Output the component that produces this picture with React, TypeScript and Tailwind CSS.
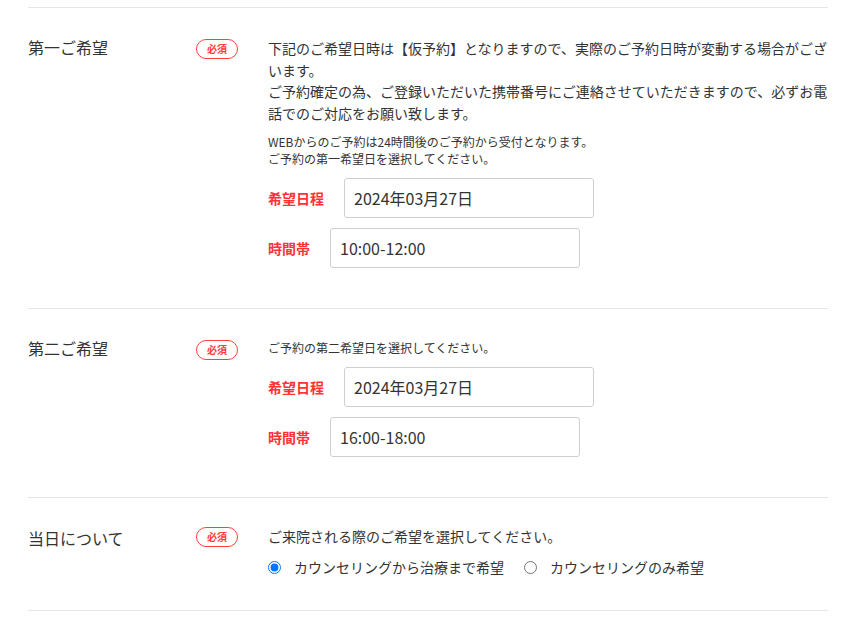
import React from "react";

const font = { fontFamily: '"Noto Sans CJK JP", "Noto Sans", sans-serif' };

function Badge() {
  return (
    <div className="w-[42px] h-[20px] shrink-0 rounded-full border border-[#ff4040] flex items-center justify-center text-[10px] font-bold text-[#ff3b3b] leading-none mt-[1px]">
      必須
    </div>
  );
}

function Field({ label, value }: { label: string; value: string }) {
  return (
    <div className="flex items-center mb-[10px]">
      <span className="text-[14px] font-bold text-[#ff3333] mr-[20px] leading-none">{label}</span>
      <input
        readOnly
        value={value}
        className="w-[250px] h-[40px] border border-[#cfcfcf] rounded-[3px] px-[9px] text-[16px] text-[#333] outline-none bg-white"
        style={font}
      />
    </div>
  );
}

function Row({
  title,
  children,
  pad,
  titlePad,
}: {
  title: string;
  children: React.ReactNode;
  pad: string;
  titlePad: string;
}) {
  return (
    <div className={"flex border-t border-[#e5e5e5] " + pad}>
      <div className={"w-[168px] shrink-0 text-[16px] text-[#333] leading-[18px] " + titlePad}>{title}</div>
      <Badge />
      <div className="w-[560px] ml-[30px] text-[#333]">{children}</div>
    </div>
  );
}

export default function App() {
  return (
    <div className="bg-white w-[849px] h-[619px] overflow-hidden" style={font}>
      <div className="w-[800px] ml-[28px] mt-[7px] border-b border-[#e5e5e5]">
        <Row title="第一ご希望" pad="pt-[30px] pb-[30px]" titlePad="pt-0">
          <p className="text-[14px] leading-[21.5px]">
            下記のご希望日時は【仮予約】となりますので、実際のご予約日時が変動する場合がございます。
            <br />
            ご予約確定の為、ご登録いただいた携帯番号にご連絡させていただきますので、必ずお電話でのご対応をお願い致します。
          </p>
          <p className="text-[12px] leading-[17px] mt-[9px]">
            WEBからのご予約は24時間後のご予約から受付となります。
            <br />
            ご予約の第一希望日を選択してください。
          </p>
          <div className="mt-[11px]">
            <Field label="希望日程" value="2024年03月27日" />
            <Field label="時間帯" value="10:00-12:00" />
          </div>
        </Row>
        <Row title="第二ご希望" pad="pt-[30px] pb-[30px]" titlePad="pt-0">
          <p className="text-[12px] leading-[17px]">ご予約の第二希望日を選択してください。</p>
          <div className="mt-[11px]">
            <Field label="希望日程" value="2024年03月27日" />
            <Field label="時間帯" value="16:00-18:00" />
          </div>
        </Row>
        <Row title="当日について" pad="pt-[28px] pb-[32px]" titlePad="pt-[3px]">
          <p className="text-[14px] leading-[21.7px]">ご来院される際のご希望を選択してください。</p>
          <div className="flex items-center mt-[9px] text-[14px] leading-[21.7px]">
            <label className="flex items-center mr-[20px]">
              <input type="radio" name="day" defaultChecked className="m-0 w-[13px] h-[13px] mr-[13px]" />
              <span>カウンセリングから治療まで希望</span>
            </label>
            <label className="flex items-center">
              <input type="radio" name="day" className="m-0 w-[13px] h-[13px] mr-[13px]" />
              <span>カウンセリングのみ希望</span>
            </label>
          </div>
        </Row>
      </div>
    </div>
  );
}
